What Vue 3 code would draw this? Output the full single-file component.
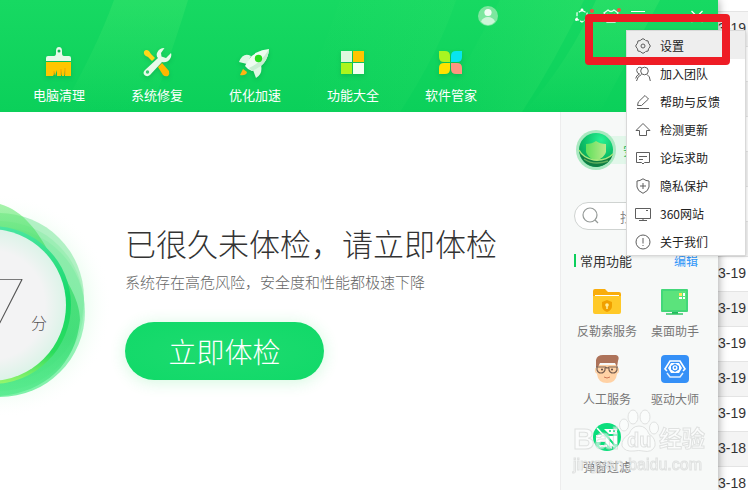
<script setup>
const nav = [
  { id: 'clean', label: '电脑清理' },
  { id: 'repair', label: '系统修复' },
  { id: 'boost', label: '优化加速' },
  { id: 'all', label: '功能大全' },
  { id: 'soft', label: '软件管家' },
]

const menu = [
  { id: 'settings', label: '设置', active: true },
  { id: 'team', label: '加入团队' },
  { id: 'feedback', label: '帮助与反馈' },
  { id: 'update', label: '检测更新' },
  { id: 'forum', label: '论坛求助' },
  { id: 'privacy', label: '隐私保护' },
  { id: 'site', label: '360网站' },
  { id: 'about', label: '关于我们' },
]

const tools = [
  { id: 'folder', label: '反勒索服务' },
  { id: 'desktop', label: '桌面助手' },
  { id: 'human', label: '人工服务' },
  { id: 'driver', label: '驱动大师' },
  { id: 'popup', label: '弹窗过滤' },
]

const dates = [...Array(12).fill('03-19'), '03-18', '03-18']
</script>

<template>
  <div class="desktop">
    <div class="window">
      <header class="header">
        <svg class="header-bg" viewBox="0 0 718 112" preserveAspectRatio="none" aria-hidden="true">
          <defs>
            <linearGradient id="beam" x1="0" y1="0" x2="0" y2="1">
              <stop offset="0" stop-color="#3de56c" stop-opacity=".4" /><stop offset="1" stop-color="#3de56c" stop-opacity="0" />
            </linearGradient>
            <linearGradient id="beam-soft" x1="0" y1="0" x2="1" y2="0">
              <stop offset="0" stop-color="#3de56c" stop-opacity="0" /><stop offset="1" stop-color="#3de56c" stop-opacity=".3" />
            </linearGradient>
          </defs>
          <path d="M114 0H188Q176 40 150 112H60Q96 50 114 0Z" fill="url(#beam)" />
          <path d="M340 0H456Q440 50 400 112H300Z" fill="url(#beam-soft)" opacity=".5" />
          <path d="M500 0H584Q556 60 522 112H440Z" fill="url(#beam-soft)" />
          <path d="M596 0H660L600 112H524Q570 60 596 0Z" fill="url(#beam)" />
        </svg>
        <div class="titlebar">
          <button class="icon-btn avatar" aria-label="账号">
            <svg width="20" height="20" viewBox="0 0 20 20">
              <circle cx="10" cy="10" r="10" fill="#7de79f" />
              <circle cx="10" cy="6.500" r="3.600" fill="#f1fdf4" />
              <path d="M3 15.500Q5 11 10 11T17 15.500Q14 19 10 19T3 15.500Z" fill="#cdf6d9" />
            </svg>
          </button>
          <button class="icon-btn" aria-label="插件">
            <svg width="20" height="16" viewBox="0 0 20 16" fill="none" stroke="#e9fff0" stroke-width="1.300">
              <path d="M8 2.500L13 5V11L8 14L3 11V5Z" stroke-dasharray="4 1.200" />
              <circle cx="8" cy="2" r="1.400" fill="#fff" stroke="none" />
              <circle cx="2.500" cy="11.500" r="1.500" fill="#fff" stroke="none" />
              <circle cx="18" cy="3" r="2" fill="#f35244" stroke="none" />
            </svg>
          </button>
          <button class="icon-btn" aria-label="皮肤">
            <svg width="20" height="16" viewBox="0 0 20 16" fill="none" stroke="#e9fff0" stroke-width="1.300">
              <path d="M6 2Q9 5 12 2L16 5L14 8L13 7V14H5V7L4 8L2 5Z" />
              <circle cx="17" cy="2" r="2" fill="#f35244" stroke="none" />
            </svg>
          </button>
          <button class="icon-btn" aria-label="主菜单">
            <svg width="16" height="16" viewBox="0 0 16 16" stroke="#fff" stroke-width="1.200"><path d="M1 3.500H15M1 8.500H15M1 13.500H15" /></svg>
          </button>
          <button class="icon-btn close" aria-label="关闭">
            <svg width="14" height="14" viewBox="0 0 14 14" stroke="#fff" stroke-width="1.300"><path d="M1.500 2L12.500 13M12.500 2L1.500 13" /></svg>
          </button>
        </div>
        <nav class="nav">
          <a v-for="n in nav" :key="n.id" href="#" class="nav-item">
            <svg class="nav-icon" width="32" height="32" viewBox="0 0 32 32" aria-hidden="true">
              <g v-if="n.id === 'clean'">
                <path d="M3 15V12Q3 10 5 10H11Q13 10 13 7V5Q13 1 16 1T19 5V7Q19 10 21 10H26Q28 10 28 12V15Z" fill="#e6f9e9" />
                <circle cx="16" cy="5" r="1.500" fill="#10b650" />
                <path d="M3 16H28V30H22V24L21 30H19V25L18 30H14V24L12 30V26L10 30H3Z" fill="#ffc600" />
                <path d="M11 29V25M18 29V23M22 29V22" stroke="#f5a300" />
              </g>
              <g v-else-if="n.id === 'repair'">
                <path d="M3 5.500Q5 3 8 5L10 8L14 12L11 15L7 11Q2 9 3 5.500Z" fill="#ffd71a" />
                <path d="M17 21L21 17L28 25Q29 28 27 30Q24 31 22 29Z" fill="#ffb700" />
                <path d="M23.500 2Q18 2 16 7Q15 10 17 12L4 24Q1 27 4 29.500Q7 31 9 29L21 16Q26 17 29 13Q31 10 30 7L25 12L20.500 10.500L20 7Z" fill="#e8faea" />
                <circle cx="6.500" cy="26" r="1.700" fill="#36cb70" />
              </g>
              <g v-else-if="n.id === 'boost'">
                <path d="M12 10Q4 6 0 16L8 18ZM22 19Q24 28 17 32L14 24Z" fill="#dff8e4" />
                <path d="M30 3Q13 4 6 20Q8 23 13 25Q29 19 30 3Z" fill="#effcf1" />
                <path d="M10 22Q22 17 30 3Q29 19 13 25Z" fill="#c9eed2" />
                <circle cx="19.500" cy="12.500" r="3.700" fill="#28db20" />
                <path d="M4 23L8 26Q7 30 1 29Z" fill="#ffb312" />
              </g>
              <g v-else-if="n.id === 'all'">
                <path d="M4 5H15V16H4Z" fill="#def8df" /><path d="M16 5H27V16H16Z" fill="#ffc500" />
                <path d="M4 17H15V28H4Z" fill="#abf51e" /><path d="M16 17H27V28H16Z" fill="#f3fff1" />
              </g>
              <g v-else>
                <path d="M4 5H10Q15 5 15 10V16H9Q4 16 4 11Z" fill="#a8f521" />
                <path d="M27 5H21Q16 5 16 10V16H22Q27 16 27 11Z" fill="#08e5ef" />
                <path d="M4 28H10Q15 28 15 23V17H9Q4 17 4 22Z" fill="#ffe200" />
                <path d="M27 28H21Q16 28 16 23V17H22Q27 17 27 22Z" fill="#ff9580" />
              </g>
            </svg>
            <span>{{ n.label }}</span>
          </a>
        </nav>
      </header>

      <div class="body">
        <main class="main">
          <section class="score">
            <svg class="rings" width="125" height="240" viewBox="0 0 125 240" aria-hidden="true">
              <defs>
                <radialGradient id="halo" cx="0" cy="122" r="112" gradientUnits="userSpaceOnUse">
                  <stop offset=".7" stop-color="#c9fad6" stop-opacity=".45" />
                  <stop offset="1" stop-color="#fff" stop-opacity="0" />
                </radialGradient>
                <linearGradient id="top" x1="0" y1="0" x2="0" y2="1">
                  <stop offset="0" stop-color="#72ec78" /><stop offset=".3" stop-color="#2ad95a" /><stop offset=".7" stop-color="#22d663" />
                  <stop offset="1" stop-color="#4be986" />
                </linearGradient>
                <linearGradient id="low" x1="0" y1="0" x2="0" y2="1">
                  <stop offset="0" stop-color="#7be8a0" stop-opacity=".4" /><stop offset="1" stop-color="#5cee92" />
                </linearGradient>
                <linearGradient id="edge" x1="0" y1="0" x2="0" y2="1">
                  <stop offset="0" stop-color="#4ae6a2" /><stop offset=".45" stop-color="#16d868" />
                  <stop offset=".8" stop-color="#2bdc5d" /><stop offset="1" stop-color="#98f66c" />
                </linearGradient>
                <radialGradient id="dial">
                  <stop offset=".72" stop-color="#f3f3f4" /><stop offset="1" stop-color="#dcf3e8" />
                </radialGradient>
              </defs>
              <circle cx="0" cy="122" r="112" fill="url(#halo)" />
              <circle cx="-1" cy="122" r="85" fill="#8eeeaa" opacity=".55" />
              <circle cx="-1" cy="114" r="85" fill="#8eeaa9" opacity=".65" />
              <circle cx="0" cy="128" r="85" fill="url(#low)" opacity=".8" />
              <path d="M-60 20H0C24 27 38 48 50 70C64 92 80 114 80 136C76 180 45 208 0 212H-60Z" fill="url(#top)" opacity=".62" />
              <circle cx="-8" cy="121" r="79" fill="url(#edge)" />
              <circle cx="-10" cy="121" r="76" fill="url(#dial)" />
            </svg>
            <div class="points"><span class="digit">7</span><span class="unit">分</span></div>
          </section>
          <section class="status">
            <h1>已很久未体检，请立即体检</h1>
            <p>系统存在高危风险，安全度和性能都极速下降</p>
            <button class="check">立即体检</button>
          </section>
        </main>

        <aside class="side">
          <div class="shield">
            <svg width="40" height="40" viewBox="0 0 40 40" aria-hidden="true">
              <defs>
                <radialGradient id="orb" cx=".65" cy=".2" r=".9">
                  <stop offset="0" stop-color="#27f293" /><stop offset=".55" stop-color="#0cc068" /><stop offset="1" stop-color="#0b9350" />
                </radialGradient>
                <linearGradient id="guard"><stop offset="0" stop-color="#5fe05a" /><stop offset="1" stop-color="#b8ea8c" /></linearGradient>
              </defs>
              <circle cx="20" cy="20" r="20" fill="#a9e9c0" />
              <circle cx="20" cy="20" r="17" fill="url(#orb)" />
              <path d="M10 14Q16 14 20 11Q24 14 30 14V22Q29 27 20 31Q11 27 10 22Z" fill="url(#guard)" />
              <path d="M3 20Q7 28 18 30Q30 31 37 24Q34 35 21 37Q6 36 3 20Z" fill="#0f7d43" />
              <path d="M3 20Q7 28 18 30Q30 31 37 24" fill="none" stroke="#a6e87c" stroke-width="1.500" />
              <path d="M8 29Q18 36 32 31" fill="none" stroke="#5fae5c" stroke-width="1.500" />
            </svg>
            <span>安全防护中心</span>
          </div>
          <label class="search">
            <svg width="18" height="18" viewBox="0 0 18 18" fill="none" stroke="#959a98" stroke-width="1.200" aria-hidden="true">
              <circle cx="8" cy="8" r="7" /><path d="M13 13L16 16" />
            </svg>
            <input type="text" placeholder="找功能" aria-label="找功能" />
          </label>
          <div class="side-head"><h2>常用功能</h2><a href="#">编辑</a></div>
          <div class="tools">
            <a v-for="t in tools" :key="t.id" href="#" class="tool">
              <svg width="28" height="28" viewBox="0 0 28 28" aria-hidden="true">
                <g v-if="t.id === 'folder'">
                  <path d="M0 4Q0 2 2 2H12L15 5H26Q28 5 28 7V12H0Z" fill="#f9ad0c" />
                  <path d="M2 8H26V12H2Z" fill="#fff" />
                  <path d="M0 9H28V25Q28 27 26 27H2Q0 27 0 25Z" fill="#ffc928" />
                  <path d="M14 13L19 15V19Q19 23 14 25Q9 23 9 19V15Z" fill="#f0a000" />
                  <circle cx="14" cy="18" r="1.800" fill="#ffed9a" /><path d="M14 18V22" stroke="#ffed9a" stroke-width="1.500" />
                </g>
                <g v-else-if="t.id === 'desktop'">
                  <path d="M11 24H17V27H11Z" fill="#22b85d" />
                  <rect y="2" width="27" height="23" rx="1" fill="#43d779" /><rect x="2" y="4" width="23" height="19" fill="#5be37c" />
                  <path d="M5 27H22" stroke="#32c665" stroke-width="1.500" />
                  <path d="M18 6H21V9H18Z" fill="#ffe75a" /><path d="M22 6H24V9H22ZM18 10H21V12H18ZM22 10H24V12H22Z" fill="#fff" />
                </g>
                <g v-else-if="t.id === 'human'">
                  <path d="M4 10H24V19Q23 28 14 28T4 19Z" fill="#ffd2a5" />
                  <path d="M3 12V5Q4 0 10 0H23Q27 1 25 6L24 12L22 8H7L5 12Z" fill="#ad735a" />
                  <path d="M3 13Q2 17 4 18M25 13Q26 17 24 18" fill="none" stroke="#ffd2a5" stroke-width="1.500" />
                  <path d="M3 12H12Q13 13 15 13L16 12H25M4 12V15Q5 18 8 18T12 15V13M16 13V15Q17 18 20 18T24 15V12" fill="none" stroke="#7a6152" stroke-width="1.200" />
                  <circle cx="9" cy="14.500" r="1" fill="#574541" /><circle cx="19" cy="14.500" r="1" fill="#574541" />
                  <path d="M11 22Q14 24 17 22" fill="none" stroke="#cf7856" />
                </g>
                <g v-else-if="t.id === 'driver'">
                  <rect width="28" height="28" rx="4" fill="#3590f7" />
                  <path d="M6 16L4 14L9 6H19L24 14L22 16" fill="none" stroke="#fff" stroke-width="1.600" />
                  <path d="M10 8H18L21 13L18 18H10L7 13Z" fill="#fff" />
                  <path d="M14 8.500L18 11V14.500L14 17L10 14.500V11Z" fill="#3590f7" />
                  <circle cx="14" cy="12.700" r="1.800" fill="none" stroke="#fff" stroke-width="1.400" />
                  <path d="M6 18L9 22H19L22 18" fill="none" stroke="#e2f0ff" stroke-width="1.500" />
                </g>
                <g v-else>
                  <circle cx="14" cy="14" r="14" fill="#0bde7c" />
                  <path d="M11 6H24V11H16ZM3 12H10L19 21V26L12 19H3ZM15 13H24V21H22ZM6 22H14V24H7Z" fill="#fff" />
                  <path d="M4 5L21 24" stroke="#fff" stroke-width="1.500" />
                  <path d="M16 8H18M20 8H22" stroke="#0bde7c" stroke-width="1.500" />
                </g>
              </svg>
              <span>{{ t.label }}</span>
            </a>
          </div>
        </aside>
      </div>
    </div>

    <div class="backdrop">
      <table class="dates">
        <tbody>
          <tr v-for="(d, i) in dates" :key="i"><td>{{ d }}</td></tr>
        </tbody>
      </table>
    </div>

    <div class="watermark" aria-hidden="true">
      <div class="brand">
        <span class="bai">Bai</span>
        <span class="paw">
          <svg width="40" height="44" viewBox="0 0 40 44">
            <g fill="#fff" fill-opacity=".75" stroke="#cfd1d0" stroke-width="1">
              <ellipse cx="5" cy="16" rx="4.500" ry="6" /><ellipse cx="14" cy="8" rx="5" ry="7" />
              <ellipse cx="26" cy="8" rx="5" ry="7" /><ellipse cx="35" cy="19" rx="4.500" ry="6" />
              <path d="M20 17Q27 17 30 25Q37 29 36 37Q33 44 24 42Q20 41 15 42Q6 43 3 37Q2 30 10 25Q13 17 20 17Z" />
            </g>
          </svg>
          <span class="du">du</span>
        </span>
        <span class="jy">经验</span>
      </div>
      <div class="url">jingyan.baidu.com</div>
    </div>

    <ul class="menu">
      <li v-for="m in menu" :key="m.id">
        <button :class="['menu-item', { active: m.active }]">
          <svg width="16" height="16" viewBox="0 0 16 16" fill="none" stroke="#5e5e5e" stroke-width="1" aria-hidden="true">
            <g v-if="m.id === 'settings'">
              <path d="M6 1.800Q8 -.5 10 1.800L10.800 2.600Q14 2 13.500 5.200L14.200 6Q16.500 8 14.200 10L13.500 10.800Q14 14 10.800 13.400L10 14.200Q8 16.500 6 14.200L5.200 13.400Q2 14 2.500 10.800L1.800 10Q-.5 8 1.800 6L2.500 5.200Q2 2 5.200 2.600Z" />
              <circle cx="8" cy="8" r="2" />
            </g>
            <g v-else-if="m.id === 'team'">
              <circle cx="9.500" cy="5" r="3.800" /><path d="M6.500 8.500Q2.500 10 1.500 15M12 8.500Q15 10 15.300 15M6.500 1.500Q2 .5 1.700 4.500Q2 7.500 4.500 8Q1 9.500 .7 12.500" />
            </g>
            <g v-else-if="m.id === 'feedback'">
              <path d="M2.500 11.500L3.300 8L10 1.500L13.500 5L6.500 11.500ZM2 14.500H14" />
            </g>
            <path v-else-if="m.id === 'update'" d="M8 1.500L15 8.500H11.500V13.500H4.500V8.500H1Z" />
            <path v-else-if="m.id === 'forum'" d="M1.500 2.500H14.500V12.500H9.500L8 14L6.500 12.500H1.500ZM4 6.500H12M4 9.500H8" />
            <path v-else-if="m.id === 'privacy'" d="M8 .8Q11 3 14 3V9Q13.500 13 8 15.300Q2.500 13 2 9V3Q5 3 8 .8ZM8 5V11M5 8H11" />
            <path v-else-if="m.id === 'site'" d="M.5 2.500H15.500V12.500H.5ZM8 12.500V14.500M4 14.500H12M11 4.500H13" />
            <g v-else><circle cx="8" cy="8" r="7" /><path d="M8 4V9.500M8 11V12" /></g>
          </svg>
          <span>{{ m.label }}</span>
        </button>
      </li>
    </ul>
    <div class="highlight"></div>
  </div>
</template>

<style>
body {
  margin: 0;
  background: #fff;
}
</style>

<style scoped>
.desktop {
  position: relative;
  display: flex;
  height: 100vh;
  overflow: hidden;
  font-family: "Noto Sans CJK SC", sans-serif;
  color: #333;
}
.desktop * {
  box-sizing: border-box;
}
button {
  border: 0;
  padding: 0;
  background: none;
  font: inherit;
  color: inherit;
}
a {
  text-decoration: none;
  color: inherit;
}
svg {
  display: block;
  flex: none;
}
.window {
  position: relative;
  z-index: 1;
  flex: 1;
  display: flex;
  flex-direction: column;
  min-width: 0;
  background: #fff;
  box-shadow: 0 0 9px rgba(0, 0, 0, 0.4);
}
.header {
  position: relative;
  height: 112px;
  flex: none;
  background: linear-gradient(#17d962, #0bd05a);
}
.header-bg {
  position: absolute;
  inset: 0;
  width: 100%;
  height: 100%;
}
.titlebar {
  position: relative;
  display: flex;
  justify-content: flex-end;
  align-items: center;
  gap: 8px;
  height: 32px;
  padding-right: 14px;
}
.avatar {
  margin-right: 68px;
}
.close {
  margin-left: 36px;
}
.nav {
  position: relative;
  display: flex;
  padding: 14px 10px 0;
}
.nav-item {
  width: 98px;
  display: flex;
  flex-direction: column;
  align-items: center;
  gap: 7px;
  font-size: 13px;
  line-height: 20px;
  color: #fff;
}
.nav-icon {
  filter: drop-shadow(0 2px 2px rgba(0, 90, 40, 0.2));
}
.body {
  flex: 1;
  display: flex;
  min-height: 0;
}
.main {
  flex: 1;
  display: flex;
  min-width: 0;
}
.score {
  position: relative;
  width: 125px;
  padding-top: 72px;
}
.points {
  position: absolute;
  left: -24px;
  top: 151px;
  display: flex;
  align-items: center;
  gap: 4px;
  color: #555;
}
.digit {
  font-family: Lato, sans-serif;
  font-weight: 100;
  font-size: 88px;
  line-height: 88px;
}
.unit {
  padding-top: 30px;
  font-size: 16px;
  line-height: 24px;
  font-weight: 300;
}
.status {
  flex: 1;
  padding-top: 108px;
}
h1 {
  margin: 0;
  font-size: 31px;
  line-height: 46px;
  font-weight: 300;
  white-space: nowrap;
}
.status p {
  margin: 6px 0 30px;
  font-size: 15px;
  line-height: 20px;
  font-weight: 300;
  color: #666;
}
.check {
  width: 199px;
  height: 58px;
  border-radius: 29px;
  background: radial-gradient(#1edb70, #10d968);
  box-shadow: 0 2px 16px rgba(30, 225, 90, 0.2);
  color: #fff;
  font-size: 28px;
  font-weight: 300;
  line-height: 54px;
}
.side {
  width: 158px;
  padding: 18px 13px 0 12px;
  border-left: 1px solid #ededed;
  background: #f7f9f8;
}
.shield {
  display: flex;
  align-items: center;
  margin-left: 3px;
  height: 40px;
  background: linear-gradient(#e2f7ea, #e2f7ea) 20px center / 100% 28px no-repeat;
  font-size: 12px;
  color: #14b858;
  white-space: nowrap;
  overflow: hidden;
}
.shield span {
  margin-left: 7px;
}
.search {
  display: flex;
  align-items: center;
  margin: 32px 0 0 1px;
  height: 28px;
  padding: 0 7px;
  border: 1px solid #cfd3d1;
  border-radius: 14px;
  background: #fff;
}
.search input {
  width: 100%;
  min-width: 0;
  margin-left: 20px;
  padding: 0;
  border: 0;
  outline: 0;
  background: none;
  font: 13px "Noto Sans CJK SC", sans-serif;
}
.search input::placeholder {
  color: #888;
}
.side-head {
  display: flex;
  justify-content: space-between;
  align-items: center;
  margin: 19px 7px 0 1px;
  height: 22px;
  font-size: 12px;
}
.side-head h2 {
  margin: 0;
  padding-left: 4px;
  border-left: 2px solid #0ccf5c;
  font-size: 13px;
  line-height: 13px;
  font-weight: 400;
}
.side-head a {
  color: #2f96f8;
}
.tools {
  display: grid;
  grid-template-columns: repeat(2, 68px);
  margin-top: 16px;
}
.tool {
  display: flex;
  flex-direction: column;
  align-items: center;
  gap: 6px;
  height: 68px;
  font-size: 12px;
  line-height: 20px;
  color: #777;
  white-space: nowrap;
}
.backdrop {
  width: 30px;
  padding-top: 11px;
  display: flex;
  justify-content: flex-end;
  align-items: flex-start;
}
.dates {
  flex: none;
  width: 60px;
  border-collapse: separate;
  border-spacing: 0;
  font-family: "Liberation Sans", sans-serif;
  font-size: 14px;
}
.dates td {
  height: 35px;
  padding: 0 2px 2px 0;
  border-top: 1px solid #e4e4e4;
  text-align: right;
}
.dates tr:nth-child(odd) td {
  background: #f4f4f4;
}
.menu {
  position: absolute;
  z-index: 3;
  top: 31px;
  right: 3px;
  width: 118px;
  margin: 0;
  padding: 0;
  list-style: none;
  background: #fff;
  box-shadow: 0 0 0 1px #d9d9d9, 1px 1px 4px rgba(0, 0, 0, 0.2);
}
.menu-item {
  display: flex;
  align-items: center;
  gap: 9px;
  width: 100%;
  height: 28px;
  padding: 2px 0 0 8px;
  font-size: 12px;
  line-height: 20px;
  color: #222;
}
.menu-item.active {
  background: #eee;
}
.highlight {
  position: absolute;
  z-index: 4;
  top: 14px;
  right: 18px;
  width: 145px;
  height: 51px;
  border: 8px solid #ee1c25;
  border-radius: 4px;
  pointer-events: none;
}
.watermark {
  position: absolute;
  z-index: 2;
  top: 407px;
  right: 41px;
  width: 134px;
  opacity: 0.6;
  color: #fff;
  -webkit-text-stroke: 1px #d0d2d1;
  font-family: "Liberation Sans", "Noto Sans CJK SC", sans-serif;
  font-weight: 700;
  pointer-events: none;
}
.brand {
  display: flex;
  align-items: flex-end;
  height: 46px;
  line-height: 28px;
}
.bai {
  width: 46px;
  font-size: 30px;
}
.paw {
  position: relative;
  width: 40px;
}
.du {
  position: absolute;
  left: 8px;
  bottom: 0;
  font-size: 20px;
  line-height: 26px;
}
.jy {
  font-size: 23px;
}
.url {
  font-size: 16px;
  line-height: 24px;
  font-weight: 400;
}
</style>
